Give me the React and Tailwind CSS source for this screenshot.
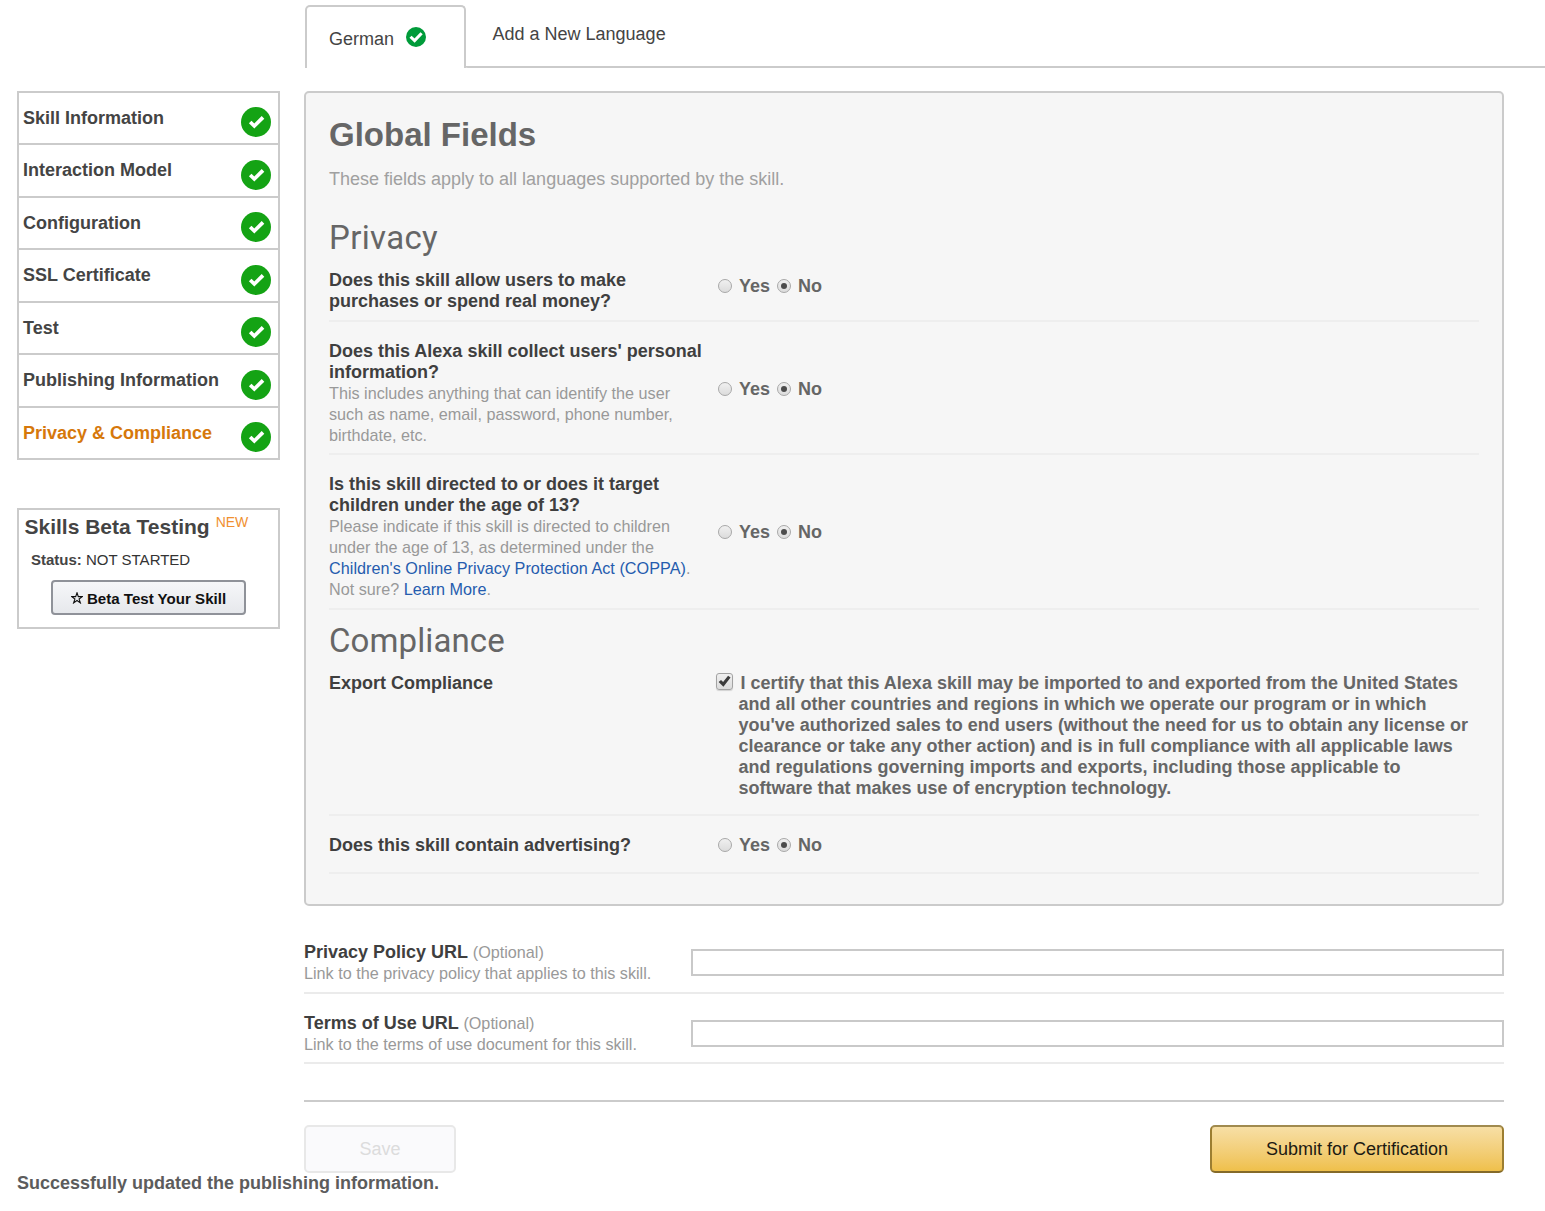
const NAV_ITEMS = [
  { label: "Skill Information", box: "h-[52px]", icon: "mt-3.5" },
  { label: "Interaction Model", box: "h-[53px]", icon: "mt-[15px]" },
  { label: "Configuration", box: "h-[52px]", icon: "mt-3.5" },
  { label: "SSL Certificate", box: "h-[53px]", icon: "mt-[15px]" },
  { label: "Test", box: "h-[52px]", icon: "mt-3.5" },
  { label: "Publishing Information", box: "h-[53px]", icon: "mt-[15px]" },
  { label: "Privacy & Compliance", box: "h-[52px]", icon: "mt-3.5", active: true },
];

function CheckCircle({ className, fill, large }) {
  return (
    <svg viewBox="0 0 30 30" className={className} aria-hidden="true">
      <circle cx="15" cy="15" r="15" fill={fill} />
      {large ? (
        <path d="M6.8 14.6 L12.9 20.5 L23.4 9.4" fill="none" stroke="#fff" strokeWidth="4.6" />
      ) : (
        <path d="M9.2 15 L13.3 19 L22 10.4" fill="none" stroke="#fff" strokeWidth="3.7" />
      )}
    </svg>
  );
}

function Radio({ checked }) {
  return (
    <span className="mt-[3px] flex size-3.5 items-center justify-center rounded-full border border-[#a8a8a8] bg-linear-to-b from-[#f0f0f0] to-[#dcdcdc]">
      {checked && <span className="size-1.5 rounded-full bg-[#4c4c4c]" />}
    </span>
  );
}

function YesNo() {
  return (
    <div className="flex h-[21px] pl-[3px] font-bold text-[#666]">
      <Radio />
      <span className="ml-[7px] w-[38px]">Yes</span>
      <Radio checked />
      <span className="ml-[7px]">No</span>
    </div>
  );
}

function FieldRow({ className, answerClass, title, children, answer }) {
  return (
    <div className={`flex border-b-2 border-[#eee] ${className}`}>
      <div className="w-[386px] shrink-0">
        <div className="pt-px font-bold text-[#3f3f3f]">{title}</div>
        {children && <Help>{children}</Help>}
      </div>
      <div className={answerClass}>{answer}</div>
    </div>
  );
}

function Help({ children }) {
  return <div className="text-[16.2px] text-[#999]">{children}</div>;
}

function UrlRow({ title, help, className }) {
  return (
    <div className={`flex border-b-2 border-[#ebebeb] ${className}`}>
      <div className="w-[387px] shrink-0">
        <div className="pt-px font-bold text-[#3f3f3f]">
          {title} <span className="text-[16.2px] font-normal text-[#999]">(Optional)</span>
        </div>
        <Help>{help}</Help>
      </div>
      <input type="text" aria-label={title} className="mt-2 h-[27px] flex-1 border-2 border-[#c9c9c9] bg-white px-2" />
    </div>
  );
}

function Sidebar() {
  return (
    <aside className="w-[263px] shrink-0">
      <nav className="border-x-2 border-b-2 border-[#cbcbcb]">
        {NAV_ITEMS.map((item) => (
          <a key={item.label} className={`flex justify-between border-t-2 border-[#cbcbcb] pr-[7px] pl-1 ${item.box}`}>
            <span className={`mt-[15px] font-bold ${item.active ? "text-[#d6780b]" : "text-[#444]"}`}>{item.label}</span>
            <CheckCircle className={`size-[30px] ${item.icon}`} fill="#14a314" />
          </a>
        ))}
      </nav>
      <section className="mt-12 h-[121px] border-2 border-[#cbcbcb]">
        <div className="flex pl-[5.5px]">
          <h3 className="mt-[5px] text-[21px] leading-6 font-bold text-[#444]">Skills Beta Testing</h3>
          <span className="mt-0.5 ml-[6px] text-[14px] leading-5 text-[#f09030]">NEW</span>
        </div>
        <div className="mt-[11px] pl-3 text-[15px] leading-5 text-[#333]">
          <b className="text-[#444]">Status:</b> NOT STARTED
        </div>
        <button className="mt-2.5 ml-8 flex h-[35px] w-[195px] items-center justify-center rounded-sm border-2 border-[#8f9299] bg-linear-to-b from-[#f6f7f9] to-[#e6e8ec] pt-px text-[15.1px] font-bold text-[#111]">
          <svg viewBox="0.5 0.5 11 11" className="mr-1 size-3" fill="none" stroke="#111" strokeWidth="1" aria-hidden="true">
            <path d="M6 1.2 L7.2 4.7 H10.9 L7.9 6.9 L9.1 10.5 L6 8.3 L2.9 10.5 L4.1 6.9 L1.1 4.7 H4.8 Z" />
          </svg>
          Beta Test Your Skill
        </button>
      </section>
    </aside>
  );
}

export default function App() {
  return (
    <div className="h-[1211px] w-[1545px] overflow-hidden bg-white font-['Liberation_Sans',Arial,sans-serif] text-[18px] leading-[21px]">
      <header className="flex h-[68px] pl-[305px]">
        <div className="mt-[5px] flex w-[161px] rounded-t-[5px] border-2 border-b-0 border-[#cbcbcb] pl-[22px] text-[#444]">
          <span className="mt-[22px]">German</span>
          <CheckCircle className="mt-5 ml-3 size-5" fill="#009b3a" large />
        </div>
        <div className="-ml-0.5 flex-1 rounded-bl-[4px] border-b-2 border-[#cbcbcb] pt-6 pl-[28.5px] text-[#444]">Add a New Language</div>
      </header>

      <div className="mt-[23px] flex pl-[17px]">
        <Sidebar />
        <main className="ml-6 w-[1200px]">
          <section className="h-[815px] rounded-[5px] border-2 border-[#cbcbcb] bg-[#f6f6f6] px-[23px] pt-6">
            <h1 className="text-[33px] leading-9 font-bold text-[#666]">Global Fields</h1>
            <p className="mt-4 text-[#a0a0a0]">These fields apply to all languages supported by the skill.</p>

            <h2 className="mt-[29px] font-[Roboto] text-[33px] leading-[38px] tracking-[0.35px] text-[#666]">Privacy</h2>
            <FieldRow
              className="mt-3 h-[53px]"
              answerClass="pt-[7px]"
              title={<>Does this skill allow users to make<br />purchases or spend real money?</>}
              answer={<YesNo />}
            />
            <FieldRow
              className="h-[133px] pt-[18px]"
              answerClass="pt-[39px]"
              title={<>Does this Alexa skill collect users' personal<br />information?</>}
              answer={<YesNo />}
            >
              This includes anything that can identify the user<br />
              such as name, email, password, phone number,<br />
              birthdate, etc.
            </FieldRow>
            <FieldRow
              className="h-[155px] pt-[18px]"
              answerClass="pt-[49px]"
              title={<>Is this skill directed to or does it target<br />children under the age of 13?</>}
              answer={<YesNo />}
            >
              Please indicate if this skill is directed to children<br />
              under the age of 13, as determined under the<br />
              <a className="tracking-[0.03px] text-[#255cae]">Children's Online Privacy Protection Act (COPPA)</a>.<br />
              Not sure? <a className="text-[#255cae]">Learn More</a>.
            </FieldRow>

            <h2 className="mt-3 font-[Roboto] text-[33px] leading-[38px] tracking-[0.1px] text-[#666]">Compliance</h2>
            <FieldRow
              className="mt-3 h-[144px]"
              title="Export Compliance"
              answer={
                <label className="flex">
                  <span className="mt-px ml-px flex size-[17px] shrink-0 items-center justify-center rounded-[3px] border border-[#a3a3a3] bg-linear-to-b from-[#f0f0f0] to-[#dcdcdc] shadow-[0_1px_1px_rgba(0,0,0,0.15)]">
                    <svg viewBox="0 0 12 12" className="size-[13px]" aria-hidden="true">
                      <path d="M0.6 6.4 L2.8 4.6 L4.7 6.5 L9.3 0.7 L11.6 2.3 L5 10.8 Z" fill="#3c3c3c" />
                    </svg>
                  </span>
                  <span className="ml-[5.5px] w-[734px] pt-px indent-[2px] font-bold text-[#666]">
                    I certify that this Alexa skill may be imported to and exported from the United States and all other countries and
                    regions in which we operate our program or in which you've authorized sales to end users (without the need for us
                    to obtain any license or clearance or take any other action) and is in full compliance with all applicable laws
                    and regulations governing imports and exports, including those applicable to software that makes use of encryption
                    technology.
                  </span>
                </label>
              }
            />
            <FieldRow
              className="h-[58px] pt-[18px]"
              answerClass="pt-px"
              title="Does this skill contain advertising?"
              answer={<YesNo />}
            />
          </section>

          <UrlRow
            className="mt-[35px] h-[53px]"
            title="Privacy Policy URL"
            help="Link to the privacy policy that applies to this skill."
          />
          <UrlRow
            className="h-[70px] pt-[18px]"
            title="Terms of Use URL"
            help="Link to the terms of use document for this skill."
          />

          <footer className="mt-9 flex justify-between border-t-2 border-[#cbcbcb] pt-[23px]">
            <button disabled className="h-12 w-[152px] rounded-[5px] border-2 border-[#e8e8e8] bg-[#fafafc] text-[#dcdcdc]">
              Save
            </button>
            <button className="h-12 w-[294px] rounded-[5px] border-2 border-[#9c7e31] border-t-[#a08a4f] border-b-[#846a29] bg-linear-to-b from-[#f7dfa5] to-[#efc04a] text-[#1c1a12]">
              Submit for Certification
            </button>
          </footer>
        </main>
      </div>
      <p className="pl-[17px] font-bold text-[#5c5c5c]">Successfully updated the publishing information.</p>
    </div>
  );
}
